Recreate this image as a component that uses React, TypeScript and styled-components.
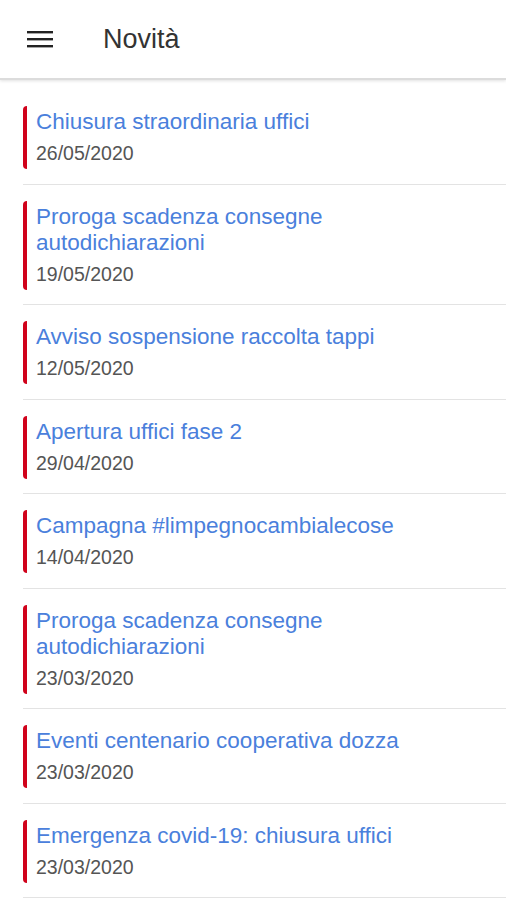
import * as React from 'react';
import styled, { createGlobalStyle } from 'styled-components';

const news = [
    { title: 'Chiusura straordinaria uffici', date: '26/05/2020' },
    { title: 'Proroga scadenza consegne autodichiarazioni', date: '19/05/2020' },
    { title: 'Avviso sospensione raccolta tappi', date: '12/05/2020' },
    { title: 'Apertura uffici fase 2', date: '29/04/2020' },
    { title: 'Campagna #limpegnocambialecose', date: '14/04/2020' },
    { title: 'Proroga scadenza consegne autodichiarazioni', date: '23/03/2020' },
    { title: 'Eventi centenario cooperativa dozza', date: '23/03/2020' },
    { title: 'Emergenza covid-19: chiusura uffici', date: '23/03/2020' },
];

export default function App() {
    return (
        <>
            <GlobalStyle />
            <Page>
                <Toolbar>
                    <MenuButton aria-label="menu">
                        <svg width="26" height="18" viewBox="0 0 26 18">
                            <rect x="0" y="1" width="26" height="2.4" fill="#222" />
                            <rect x="0" y="8" width="26" height="2.4" fill="#222" />
                            <rect x="0" y="15" width="26" height="2.4" fill="#222" />
                        </svg>
                    </MenuButton>
                    <Titolo>Novità</Titolo>
                </Toolbar>
                <Lista>
                    {news.map((n, i) => (
                        <Voce key={i}>
                            <Barra>
                                <TitoloNews>{n.title}</TitoloNews>
                                <Data>{n.date}</Data>
                            </Barra>
                        </Voce>
                    ))}
                </Lista>
            </Page>
        </>
    );
}

const GlobalStyle = createGlobalStyle`
    html, body {
        margin: 0;
        padding: 0;
        background: #fff;
    }
    body {
        font-family: "Liberation Sans", Arial, sans-serif;
    }
`;

const Page = styled.div`
    width: 506px;
    min-height: 900px;
    background: #fff;
    overflow: hidden;
`;

const Toolbar = styled.header`
    height: 80px;
    display: flex;
    align-items: center;
    padding: 0 0 0 27px;
    box-sizing: border-box;
    border-bottom: 2px solid #dcdcdc;
    box-shadow: 0 1px 3px rgba(0, 0, 0, 0.12);
`;

const MenuButton = styled.div`
    width: 26px;
    height: 18px;
    display: flex;
`;

const Titolo = styled.h1`
    margin: 0 0 0 50px;
    font-size: 27px;
    font-weight: normal;
    color: #333;
`;

const Lista = styled.div`
    padding: 10px 0 0 23px;
`;

const Voce = styled.div`
    padding: 16px 0 14.5px 0;
    border-bottom: 1px solid #e3e3e3;
`;

const Barra = styled.div`
    border-left: 4px solid #d0021b;
    border-radius: 4px 0 0 4px;
    padding: 3px 20px 3px 9px;
`;

const TitoloNews = styled.div`
    font-size: 22.5px;
    line-height: 26px;
    color: #4a80dc;
`;

const Data = styled.div`
    margin-top: 5px;
    font-size: 19.5px;
    line-height: 26px;
    color: #555;
`;
